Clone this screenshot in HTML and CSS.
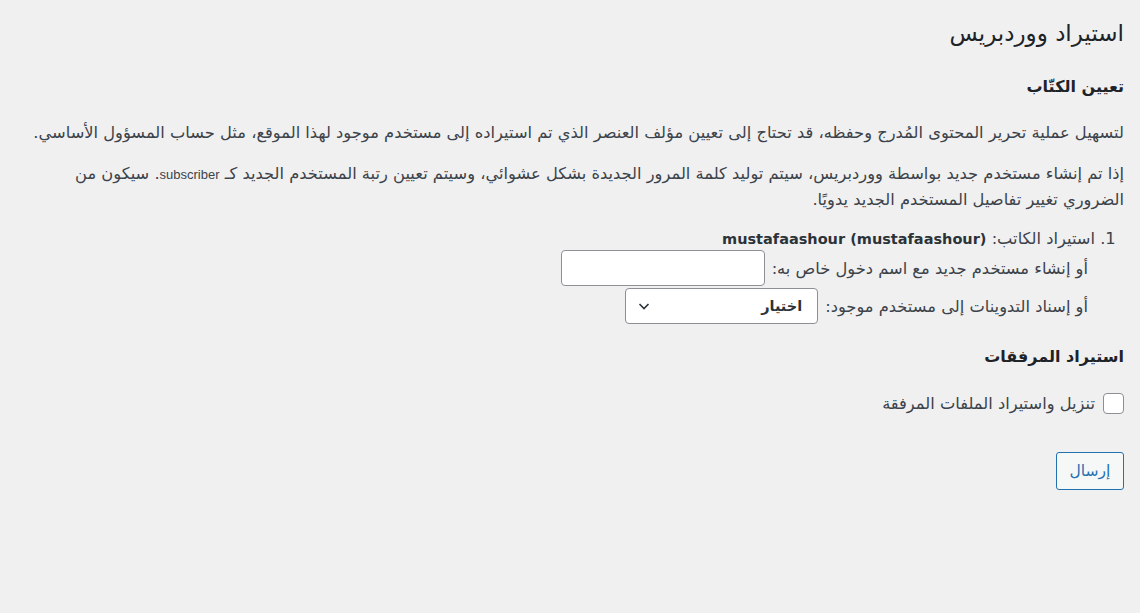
FILE: index.html
```html
<!DOCTYPE html>
<html lang="ar" dir="rtl">
<head>
  <meta charset="UTF-8">
  <title>استيراد ووردبريس</title>
  <link rel="stylesheet" href="styles.css">
</head>
<body>

  <div class="wrap">
    <h1>استيراد ووردبريس</h1>

    <form id="importForm">
      <!-- Authors -->
      <h2>تعيين الكتّاب</h2>
      <p>لتسهيل عملية تحرير المحتوى المُدرج وحفظه، قد تحتاج إلى تعيين مؤلف العنصر الذي تم استيراده إلى مستخدم موجود لهذا الموقع، مثل حساب المسؤول الأساسي.</p>
      <p>إذا تم إنشاء مستخدم جديد بواسطة ووردبريس، سيتم توليد كلمة المرور الجديدة بشكل عشوائي، وسيتم تعيين رتبة المستخدم الجديد كـ <span class="en">subscriber</span>. سيكون من الضروري تغيير تفاصيل المستخدم الجديد يدويًا.</p>

      <ol class="authors">
        <li>
          استيراد الكاتب: <strong>mustafaashour (mustafaashour)</strong>
          <div class="row">
            <label for="newUser">أو إنشاء مستخدم جديد مع اسم دخول خاص به:</label>
            <input type="text" id="newUser" class="field">
          </div>
          <div class="row">
            <label for="mapUser">أو إسناد التدوينات إلى مستخدم موجود:</label>
            <div class="select" id="mapUser">
              <span>اختيار</span>
              <svg width="14" height="14" viewBox="0 0 14 14"><path d="M2.5 5l4.5 4.5 4.5-4.5" fill="none" stroke="#2c3338" stroke-width="1.6"/></svg>
            </div>
          </div>
        </li>
      </ol>

      <!-- Attachments -->
      <h3>استيراد المرفقات</h3>
      <p class="check">
        <input type="checkbox" id="attachments">
        <label for="attachments">تنزيل واستيراد الملفات المرفقة</label>
      </p>

      <p class="submit"><button type="button" class="button">إرسال</button></p>
    </form>
  </div>

</body>
</html>
```

FILE: styles.css
```css
* { box-sizing: border-box; }
body {
  margin: 0;
  background: #f0f0f1;
  color: #3c434a;
  font-family: 'DejaVu Sans', sans-serif;
  font-size: 16.3px;
  line-height: 25px;
}

.wrap { padding: 18px 16px 0 20px; }

h1 { font-size: 23px; font-weight: 400; color: #1d2327; margin: 0 0 27px; line-height: 30px; }
h2, h3 { font-size: 16px; font-weight: 700; color: #1d2327; margin: 0; line-height: 24px; }
h2 { margin-bottom: 21px; }
h3 { margin-top: 21px; margin-bottom: 22px; }

p { margin: 0 0 16px; }
.en { font-family: 'Liberation Sans', sans-serif; font-size: 13px; }

/* Author rows */
.authors { margin: 0; padding-right: 29px; }
.authors li { line-height: 21px; }
.authors strong { color: #2c3338; font-size: 14.5px; }
.row { display: flex; align-items: center; gap: 7px; margin: 0 7px 2px 0; }
.row label { line-height: 25px; }

.field {
  width: 204px;
  height: 36px;
  border: 1px solid #8c8f94;
  border-radius: 4px;
  background: #fff;
}

.select {
  width: 193px;
  height: 36px;
  border: 1px solid #8c8f94;
  border-radius: 4px;
  background: #fff;
  display: flex;
  align-items: center;
  justify-content: space-between;
  padding: 0 15px 0 11px;
  color: #2c3338;
  font-size: 14.5px;
  font-weight: 700;
}

/* Attachments */
.check { display: flex; align-items: center; gap: 8px; margin-bottom: 36px; }
.check input {
  appearance: none;
  width: 21px;
  height: 21px;
  margin: 0;
  border: 1px solid #8c8f94;
  border-radius: 4px;
  background: #fff;
}

.button {
  width: 68px;
  height: 38px;
  padding: 0;
  border: 1px solid #2271b1;
  border-radius: 3px;
  background: #f6f7f7;
  color: #2271b1;
  font-size: 15.5px;
  font-family: inherit;
}
```
